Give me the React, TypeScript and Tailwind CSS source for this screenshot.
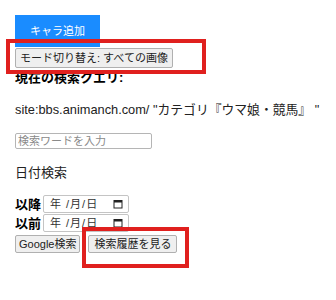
import React from 'react';

const font = { fontFamily: '"Liberation Sans", "Noto Sans CJK JP", sans-serif' };

const CalendarIcon = () => (
  <svg width="10" height="10" viewBox="0 0 10 10" className="shrink-0">
    <rect x="1" y="1.5" width="8" height="7.5" fill="none" stroke="#222" strokeWidth="1" />
    <rect x="1" y="1.5" width="8" height="2" fill="#222" />
  </svg>
);

const DateField = ({ label }: { label: string }) => (
  <div className="flex items-center h-[18px]">
    <span className="w-[28px] text-[13px] font-bold text-black leading-none">{label}</span>
    <div className="flex items-center w-[86px] h-[18px] border border-[#c4c4c4] rounded-[2px] bg-white pl-[6px] pr-[5px]">
      <span className="text-[11px] text-[#333] tracking-[1px] flex-1 leading-none">年 /月/日</span>
      <CalendarIcon />
    </div>
  </div>
);

const App = () => {
  return (
    <div className="relative w-[336px] h-[300px] bg-white overflow-hidden" style={font}>
      <div className="pl-[15px] pt-[15px]">
        <button className="block w-[85px] h-[32px] bg-[#1a8cff] text-white text-[11px]">
          キャラ追加
        </button>
        <button className="block mt-[1px] h-[20px] px-[4px] bg-[#efefef] border border-[#b0b0b0] rounded-[2px] text-[11px] text-[#222] leading-none">
          モード切り替え: すべての画像
        </button>
        <div className="mt-[1px] h-[18px] leading-[18px] text-[13px] font-bold text-black">
          現在の検索クエリ:
        </div>
        <div className="mt-[14px] h-[18px] leading-[18px] text-[12.8px] text-[#222] whitespace-nowrap">
          site:bbs.animanch.com/ "カテゴリ『ウマ娘・競馬』 "
        </div>
        <input
          className="block mt-[14px] w-[137px] h-[16px] border border-[#b5b5b5] rounded-[2px] px-[2px] text-[11px] placeholder:text-[#8a8a8a] outline-none"
          placeholder="検索ワードを入力"
        />
        <div className="mt-[15px] h-[18px] leading-[18px] text-[13px] text-[#222]">日付検索</div>
        <div className="mt-[13px]">
          <DateField label="以降" />
        </div>
        <div className="mt-[1px]">
          <DateField label="以前" />
        </div>
        <div className="mt-[3px] flex gap-[8px]">
          <button className="h-[18px] px-[3px] bg-[#efefef] border border-[#b0b0b0] rounded-[2px] text-[11px] text-[#222] leading-none">
            Google検索
          </button>
          <button className="h-[18px] px-[5px] bg-[#efefef] border border-[#b0b0b0] rounded-[2px] text-[11px] text-[#222] leading-none">
            検索履歴を見る
          </button>
        </div>
      </div>

      {/* annotation boxes */}
      <div className="absolute left-[6px] top-[39px] w-[200px] h-[35px] border-[4px] border-[#e0201e]" />
      <div className="absolute left-[82px] top-[227px] w-[107px] h-[41px] border-[4px] border-[#e0201e]" />
    </div>
  );
};

export default App;
